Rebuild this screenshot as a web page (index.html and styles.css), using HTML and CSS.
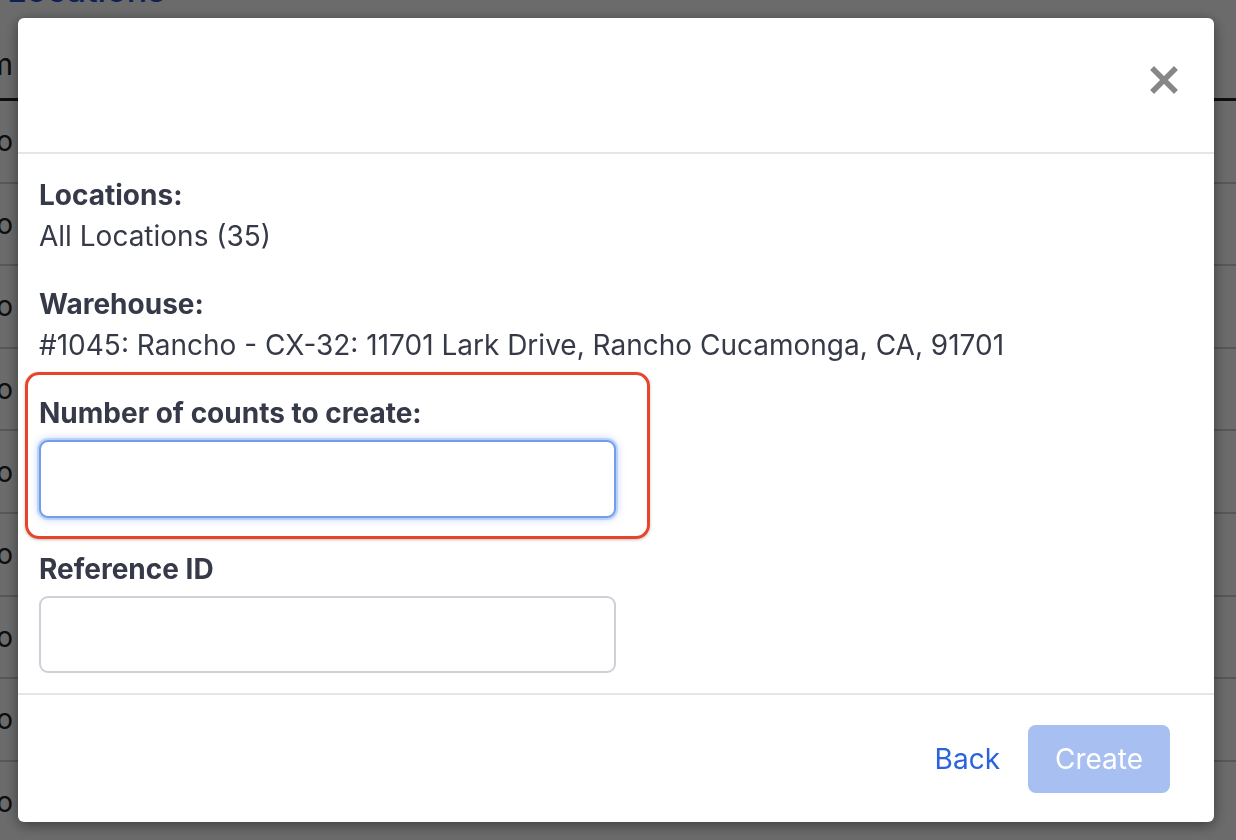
FILE: index.html
```html
<!DOCTYPE html>
<html lang="en">
<head>
    <meta charset="UTF-8">
    <meta name="viewport" content="width=device-width, initial-scale=1.0">
    <title>Create Counts</title>
    <link rel="stylesheet" href="styles.css">
</head>
<body>
    <!-- Page behind the modal -->
    <div class="page">
        <h1 class="page-title">Locations</h1>
        <div class="grid">
            <div class="grid-head"><span class="cell">Item</span></div>
            <div class="grid-row"><span class="cell">Rancho</span></div>
            <div class="grid-row"><span class="cell">Rancho</span></div>
            <div class="grid-row"><span class="cell">Rancho</span></div>
            <div class="grid-row"><span class="cell">Rancho</span></div>
            <div class="grid-row"><span class="cell">Rancho</span></div>
            <div class="grid-row"><span class="cell">Rancho</span></div>
            <div class="grid-row"><span class="cell">Rancho</span></div>
            <div class="grid-row"><span class="cell">Rancho</span></div>
            <div class="grid-row"><span class="cell">Rancho</span></div>
        </div>
    </div>

    <!-- Modal -->
    <div class="overlay">
        <div class="modal">
            <div class="modal-header">
                <button class="close-btn" aria-label="Close">
                    <svg width="28" height="28" viewBox="0 0 28 28">
                        <path d="M4 4 L24 24 M24 4 L4 24" stroke="#878787" stroke-width="5.5" stroke-linecap="square" fill="none"/>
                    </svg>
                </button>
            </div>

            <div class="modal-body">
                <div class="field">
                    <div class="field-label">Locations:</div>
                    <div class="field-value">All Locations (35)</div>
                </div>
                <div class="field">
                    <div class="field-label">Warehouse:</div>
                    <div class="field-value">#1045: Rancho - CX-32: 11701 Lark Drive, Rancho Cucamonga, CA, 91701</div>
                </div>
                <div class="field highlight">
                    <label class="field-label" for="counts">Number of counts to create:</label>
                    <input id="counts" class="text-input focused" type="text">
                </div>
                <div class="field last">
                    <label class="field-label" for="refId">Reference ID</label>
                    <input id="refId" class="text-input" type="text">
                </div>
            </div>

            <div class="modal-footer">
                <button class="back-btn">Back</button>
                <button class="create-btn" disabled>Create</button>
            </div>
        </div>
    </div>
</body>
</html>
```

FILE: styles.css
```css
* {
    box-sizing: border-box;
}

body {
    margin: 0;
    height: 840px;
    overflow: hidden;
    font-family: 'Inter', 'Noto Sans', sans-serif;
    background-color: #ffffff;
    color: #363947;
}

/* Page behind */
.page {
    margin-left: -200px;
}
.page-title {
    margin: -30px 0 0 207px;
    font-size: 34px;
    line-height: 40px;
    font-weight: 500;
    color: #2450c8;
}
.grid-head {
    height: 91px;
    display: flex;
    align-items: flex-end;
    padding-bottom: 16px;
    border-bottom: 3px solid #222;
    font-size: 30px;
    color: #222;
}
.grid-row {
    height: 82.6px;
    display: flex;
    align-items: center;
    border-bottom: 2px solid #cfcfcf;
    font-size: 28px;
    color: #222;
}
.cell {
    width: 213px;
    text-align: right;
}

/* Modal */
.overlay {
    position: fixed;
    inset: 0;
    padding: 18px 22px 18px 18px;
    background-color: rgba(0, 0, 0, 0.58);
}
.modal {
    height: 100%;
    display: flex;
    flex-direction: column;
    background-color: #ffffff;
    border-radius: 6px;
    box-shadow: 0 3px 14px rgba(0, 0, 0, 0.45);
}
.modal-header {
    flex-shrink: 0;
    height: 136px;
    display: flex;
    justify-content: flex-end;
    align-items: flex-start;
    padding: 48px 36px 0 0;
    border-bottom: 2px solid #e6e6e6;
}
.close-btn {
    width: 28px;
    height: 28px;
    padding: 0;
    border: none;
    background: none;
    cursor: pointer;
}
.close-btn svg {
    display: block;
}

.modal-body {
    flex: 1;
    padding: 23px 21px 0;
}
.field {
    margin-bottom: 32px;
}
.field.last {
    margin-bottom: 0;
}
.field-label {
    display: block;
    font-size: 28px;
    line-height: 36px;
    font-weight: 700;
    margin-bottom: 5px;
}
.field-value {
    font-size: 28px;
    line-height: 36px;
}
.highlight {
    width: 625px;
    margin: -23px 0 12px -14px;
    padding: 20px 0 18px 11px;
    border: 3px solid #e6452b;
    border-radius: 14px;
    box-shadow: 0 1px 3px rgba(0, 0, 0, 0.25);
}
.highlight .field-label,
.last .field-label {
    margin-bottom: 9px;
}
.text-input {
    display: block;
    width: 577px;
    height: 77px;
    padding: 0 16px;
    font-family: inherit;
    font-size: 28px;
    border: 2px solid #cdd1d7;
    border-radius: 9px;
    outline: none;
}
.text-input.focused {
    height: 78px;
    border-color: #6f9fea;
    box-shadow: 0 0 0 2px rgba(120, 160, 240, 0.3), 0 0 8px rgba(90, 140, 235, 0.55);
}

/* Footer */
.modal-footer {
    flex-shrink: 0;
    height: 129px;
    display: flex;
    justify-content: flex-end;
    align-items: center;
    gap: 28px;
    padding: 0 44px 0 0;
    border-top: 2px solid #e6e6e6;
}
.back-btn {
    padding: 0;
    border: none;
    background: none;
    font-family: inherit;
    font-size: 28px;
    color: #2b62de;
    cursor: pointer;
}
.create-btn {
    width: 142px;
    height: 68px;
    border: none;
    border-radius: 8px;
    background-color: #a8bff2;
    font-family: inherit;
    font-size: 28px;
    color: #ffffff;
}
```
